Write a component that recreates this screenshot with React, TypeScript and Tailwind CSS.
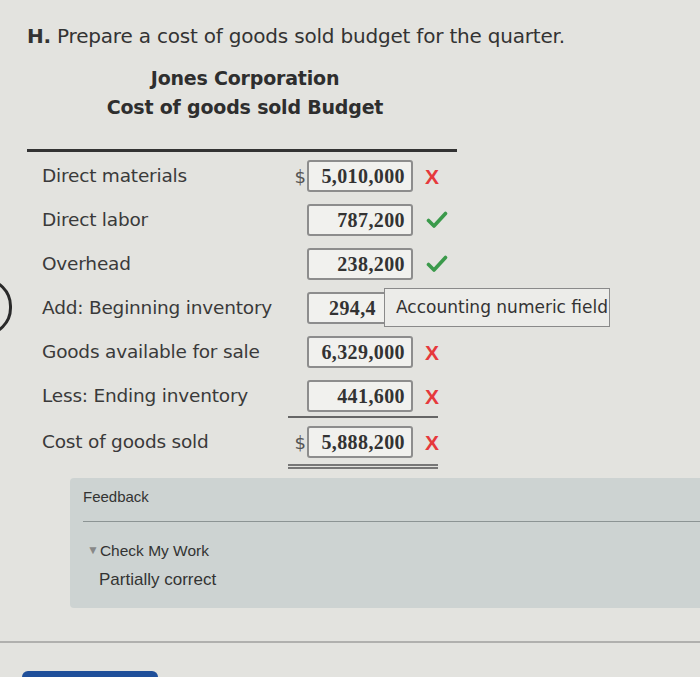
import React from 'react'

type Mark = 'x' | 'check' | null

interface Row {
  label: string
  value: string
  dollar?: boolean
  mark: Mark
  tooltip?: boolean
}

const rows: Row[] = [
  { label: 'Direct materials', value: '5,010,000', dollar: true, mark: 'x' },
  { label: 'Direct labor', value: '787,200', mark: 'check' },
  { label: 'Overhead', value: '238,200', mark: 'check' },
  { label: 'Add: Beginning inventory', value: '294,400', mark: null, tooltip: true },
  { label: 'Goods available for sale', value: '6,329,000', mark: 'x' },
  { label: 'Less: Ending inventory', value: '441,600', mark: 'x' },
  { label: 'Cost of goods sold', value: '5,888,200', dollar: true, mark: 'x' },
]

function MarkIcon({ mark }: { mark: Mark }) {
  if (mark === 'x') {
    return (
      <span
        className="w-6 text-[21px] font-bold leading-none text-[#e6393c]"
        style={{ fontFamily: '"Liberation Sans", Arial, sans-serif' }}
      >
        X
      </span>
    )
  }
  if (mark === 'check') {
    return (
      <svg width="22" height="18" viewBox="0 0 22 18" className="w-6">
        <path d="M2.5 9.5 L8 15 L19.5 2.5" fill="none" stroke="#3b9a4b" strokeWidth="3.6" strokeLinecap="round" strokeLinejoin="round" />
      </svg>
    )
  }
  return <span className="w-6" />
}

function BudgetRow({ row }: { row: Row }) {
  return (
    <div className="flex items-center h-[44px]">
      <div className="w-[250px] text-[18.5px] text-[#3a3a3a] tracking-[-0.2px]">{row.label}</div>
      <div className="w-[14px] text-[18px] text-[#555] text-right">{row.dollar ? '$' : ''}</div>
      <div className="relative">
        {row.tooltip ? (
          <div className="w-[106px] h-[32px] ml-[1px] border-2 border-[#8d8d8d] rounded-[3px] bg-[#f1f1ee] flex items-center pl-[20px] text-[#333]">
            <span
              className="whitespace-nowrap text-[20px] font-bold tracking-[0.4px]"
              style={{ fontFamily: '"Liberation Serif", serif' }}
            >
              294,4
            </span>
          </div>
        ) : (
          <div
            className="w-[106px] h-[32px] ml-[1px] border-2 border-[#8d8d8d] rounded-[3px] bg-[#f1f1ee] flex items-center justify-end pr-[6px] text-[20px] font-bold tracking-[0.4px] text-[#333]"
            style={{ fontFamily: '"Liberation Serif", serif' }}
          >
            {row.value}
          </div>
        )}
        {row.tooltip && (
          <div className="absolute left-[78px] top-[-4px] w-[226px] h-[39px] bg-[#ecece9] border border-[#8a8a8a] flex items-center px-[11px] text-[17px] text-[#333] whitespace-nowrap z-10">
            Accounting numeric field
          </div>
        )}
      </div>
      <div className="ml-[12px] flex items-center">
        <MarkIcon mark={row.mark} />
      </div>
    </div>
  )
}

export default function App() {
  return (
    <div
      className="w-[700px] h-[677px] overflow-hidden bg-[#e3e3df] relative"
      style={{ fontFamily: '"DejaVu Sans", Verdana, sans-serif' }}
    >
      <div className="absolute left-[-44px] top-[278px] w-[56px] h-[58px] rounded-full border-[3px] border-[#2a2a2a]" />

      <div className="pl-[27px] pt-[21px]">
        <h1 className="text-[20px] text-[#333] tracking-[-0.2px]">
          <span className="font-bold">H.</span> Prepare a cost of goods sold budget for the quarter.
        </h1>
        <div className="w-[436px] mt-[13px] text-center font-bold text-[#2e2e2e] text-[19px] leading-[29px] tracking-[-0.2px]">
          <div>Jones Corporation</div>
          <div>Cost of goods sold Budget</div>
        </div>
        <div className="w-[430px] mt-[27px] h-[3px] bg-[#333]" />
      </div>

      <div className="pl-[42px] pt-[2px]">
        {rows.slice(0, 6).map(row => (
          <BudgetRow key={row.label} row={row} />
        ))}
        <div className="ml-[246px] w-[150px] h-[2px] bg-[#666] -mt-[2px] mb-[2px]" />
        <BudgetRow row={rows[6]} />
        <div className="ml-[246px] w-[150px] h-[5px] border-y-2 border-[#777]" />
      </div>

      <div
        className="ml-[70px] mt-[9px] h-[130px] bg-[#cdd3d2] rounded-l-[4px] pl-[13px] pt-[8px] text-[#333]"
        style={{ fontFamily: '"Liberation Sans", Arial, sans-serif' }}
      >
        <div className="text-[15px]">Feedback</div>
        <div className="mt-[12px] h-[1px] bg-[#8c9494]" />
        <div className="mt-[17px] text-[15.5px] flex items-center">
          <span className="text-[12px] text-[#888] mr-[1px] ml-[4px]">▼</span>Check My Work
        </div>
        <div className="mt-[5px] ml-[16px] text-[17px]">Partially correct</div>
      </div>

      <div className="mt-[33px] h-[2px] bg-[#b0b0ae]" />
      <div className="ml-[22px] mt-[28px] w-[136px] h-[12px] bg-[#1f4f9a] rounded-t-[6px]" />
    </div>
  )
}
